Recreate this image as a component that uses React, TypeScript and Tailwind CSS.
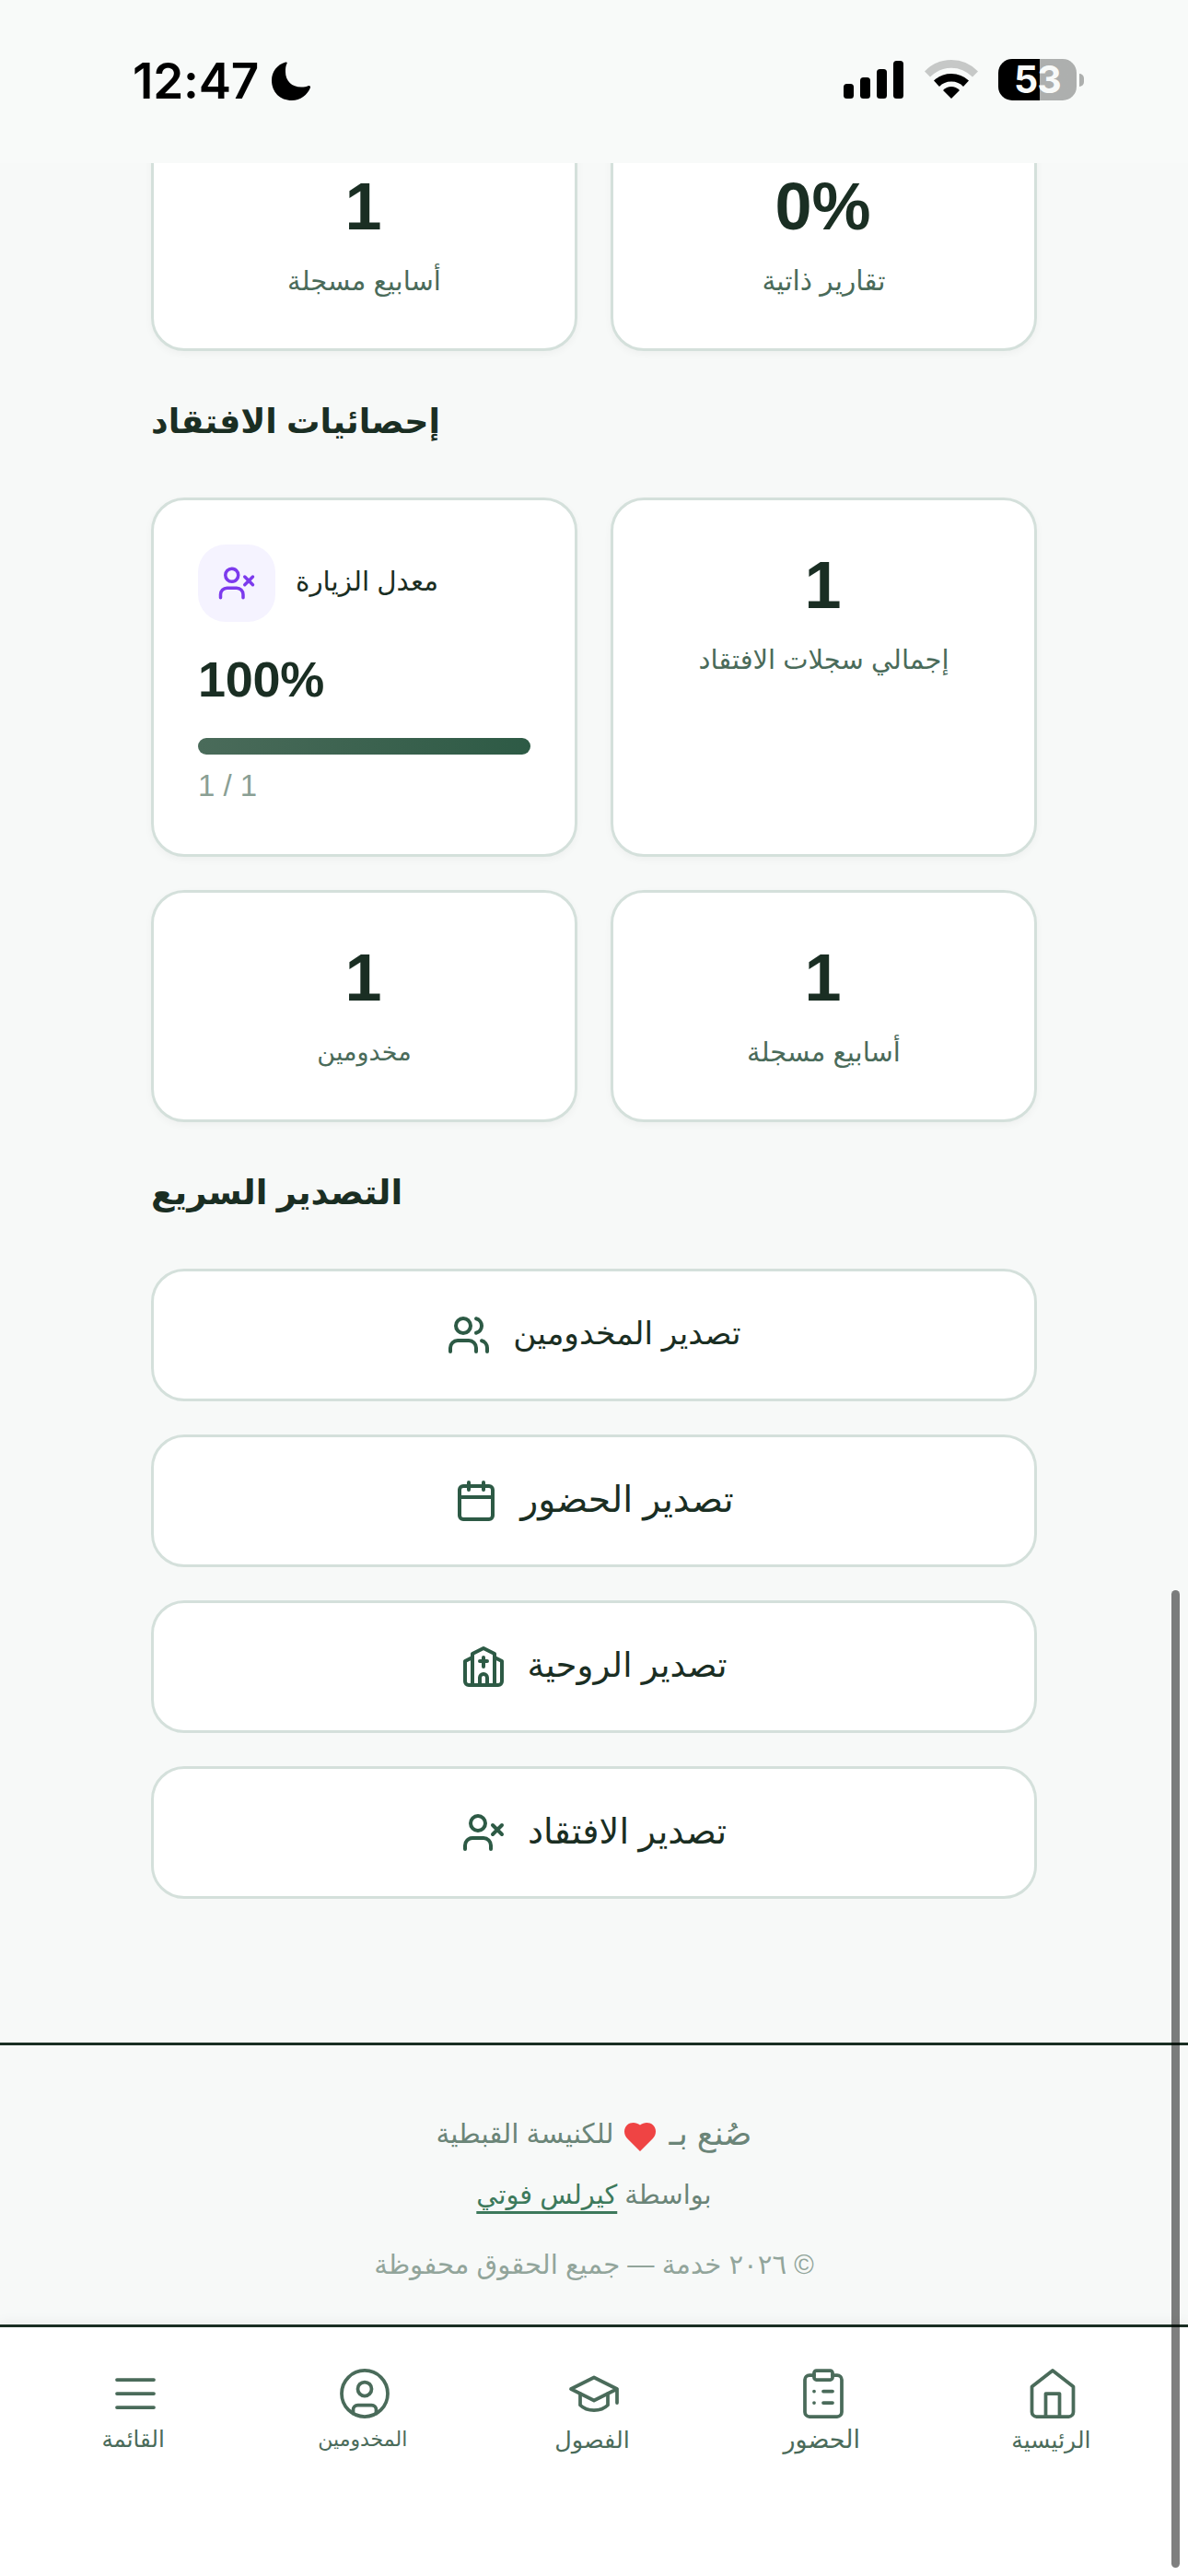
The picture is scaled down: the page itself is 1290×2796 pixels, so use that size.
import type { ReactNode } from "react";

function Stat({ value, label, size = "text-[29px]" }: { value: string; label: string; size?: string }) {
  return (
    <div className="h-full rounded-[36px] border-3 border-[#d4e0db] bg-white pt-[56px] text-center shadow-[0_3px_9px_rgba(0,0,0,0.04)]">
      <p className="pr-[2px] text-[72px] leading-[72px] font-bold text-[#1a2e23]">{value}</p>
      <p dir="rtl" className={`mt-5 leading-[50px] text-[#4a6b5a] ${size}`}>{label}</p>
    </div>
  );
}

function Icon({ size, stroke, children }: { size: number; stroke: number; children: ReactNode }) {
  return (
    <svg
      width={size}
      height={size}
      viewBox="0 0 24 24"
      fill="none"
      stroke="currentColor"
      strokeWidth={stroke}
      strokeLinecap="round"
      strokeLinejoin="round"
      className="shrink-0"
    >
      {children}
    </svg>
  );
}

const userX = (
  <>
    <path d="M16 21v-2a4 4 0 0 0-4-4H6a4 4 0 0 0-4 4v2" />
    <circle cx="9" cy="7" r="4" />
    <path d="m17 8 5 5M22 8l-5 5" />
  </>
);

const exportButtons = [
  {
    label: "تصدير المخدومين",
    size: "text-[34.4px]",
    icon: (
      <>
        <path d="M16 21v-2a4 4 0 0 0-4-4H6a4 4 0 0 0-4 4v2" />
        <circle cx="9" cy="7" r="4" />
        <path d="M22 21v-2a4 4 0 0 0-3-3.87M16 3.13a4 4 0 0 1 0 7.75" />
      </>
    ),
  },
  {
    label: "تصدير الحضور",
    size: "text-[39.4px]",
    icon: (
      <>
        <path d="M8 2v4M16 2v4M3 10h18" />
        <rect x="3" y="4" width="18" height="18" rx="2" />
      </>
    ),
  },
  {
    label: "تصدير الروحية",
    size: "text-[37.1px]",
    icon: (
      <>
        <path d="m18 7 4 2v11a2 2 0 0 1-2 2H4a2 2 0 0 1-2-2V9l4-2" />
        <path d="M14 22v-4a2 2 0 0 0-4 0v4M18 22V5l-6-3-6 3v17M12 7v5M10 9h4" />
      </>
    ),
  },
  { label: "تصدير الافتقاد", size: "text-[38.2px]", icon: userX },
];

const tabs = [
  { label: "القائمة", size: "text-[24.5px]", icon: <path d="M4 6h16M4 12h16M4 18h16" /> },
  {
    label: "المخدومين",
    size: "text-[22px]",
    icon: (
      <>
        <circle cx="12" cy="12" r="10" />
        <circle cx="12" cy="10" r="3" />
        <path d="M7 20.662V19a2 2 0 0 1 2-2h6a2 2 0 0 1 2 2v1.662" />
      </>
    ),
  },
  {
    label: "الفصول",
    size: "text-[25.5px]",
    icon: (
      <>
        <path d="M22 10v6M2 10l10-5 10 5-10 5z" />
        <path d="M6 12v5c3 3 9 3 12 0v-5" />
      </>
    ),
  },
  {
    label: "الحضور",
    size: "text-[27px]",
    icon: (
      <>
        <rect x="8" y="2" width="8" height="4" rx="1" />
        <path d="M16 4h2a2 2 0 0 1 2 2v14a2 2 0 0 1-2 2H6a2 2 0 0 1-2-2V6a2 2 0 0 1 2-2h2" />
        <path d="M12 11h4M12 16h4M8 11h.01M8 16h.01" />
      </>
    ),
  },
  {
    label: "الرئيسية",
    size: "text-[25px]",
    icon: (
      <>
        <path d="m3 9 9-7 9 7v11a2 2 0 0 1-2 2H5a2 2 0 0 1-2-2z" />
        <path d="M9 22V12h6v10" />
      </>
    ),
  },
];

export default function App() {
  return (
    <div className="relative flex h-[2796px] w-[1290px] flex-col overflow-hidden bg-[#f7f9f8] font-['Liberation_Sans','DejaVu_Sans',sans-serif]">
      <header className="z-10 flex h-[177px] shrink-0 items-start justify-between bg-[#f8faf9] pt-[64px] pr-[113px] pl-[144px] text-black">
        <div className="flex items-center">
          <span className="font-['Inter'] text-[53px] leading-[48px] font-semibold tracking-[-0.2px]">12:47</span>
          <svg width="42" height="42" viewBox="0 0 42 42" className="ml-[14px]">
            <path d="M15 .5Q17.500 0 16.500 2C15 5 15 8 15 11c0 10 7 16.500 17 16.500 3 0 6-.5 8-1.500Q42.500 26 42 28C39 36 31 42 22 42 9 42 0 33 0 20 0 11 6 3 15 .5Z" />
          </svg>
        </div>
        <div className="flex items-start">
          <svg width="65" height="41" viewBox="0 0 65 41" className="mt-[2px]">
            <rect y="25" width="11" height="16" rx="3.5" />
            <rect x="18" y="18" width="11" height="23" rx="3.5" />
            <rect x="36" y="9" width="11" height="32" rx="3.5" />
            <rect x="54" width="11" height="41" rx="3.5" />
          </svg>
          <svg width="58" height="42" viewBox="0 0 58 42" className="mt-px ml-[23px]">
            <path fill="#c6c8c7" d="M0 12.500Q12 0 29 0T58 12.500L52 18.500Q42 8.700 29 8.700T6 18.500Z" />
            <path d="M10 22.500Q18 15 29 15T48 22.500L42 29Q37 23.500 29 23.500T16 29Z" />
            <path d="M20 33Q24 29 29 29T38 33L29 42Z" />
          </svg>
          <div className="ml-[22px] flex h-[45px] w-[85px] items-center justify-center rounded-[15px] bg-linear-to-r from-black from-53% to-[#adafae] to-53%">
            <span className="font-['Inter'] text-[41px] leading-none font-bold tracking-[-0.8px] text-[#f8faf9]">53</span>
          </div>
          <span className="mt-[16px] ml-[3px] h-[14px] w-[5px] rounded-r-full bg-[#adafae]" />
        </div>
      </header>

      <main className="-mt-12 flex h-[2088px] shrink-0 flex-col px-[164px]">
        <div className="grid h-[252px] grid-cols-2 gap-9">
          <Stat value="1" label="أسابيع مسجلة" />
          <Stat value="0%" label="تقارير ذاتية" size="text-[29.7px]" />
        </div>

        <div className="flex h-[159px] items-center pb-[5px]">
          <h2 dir="rtl" className="text-[36.4px] font-bold text-[#1a2e23]">إحصائيات الافتقاد</h2>
        </div>

        <div className="grid grid-cols-2 grid-rows-[390px_252px] gap-9">
          <div className="rounded-[36px] border-3 border-[#d4e0db] bg-white p-12 shadow-[0_3px_9px_rgba(0,0,0,0.04)]">
            <div className="flex items-center gap-[22px]">
              <div className="flex h-[84px] w-[84px] items-center justify-center rounded-[30px] bg-[#f5f3ff] text-[#7c3aed]">
                <Icon size={42} stroke={2}>{userX}</Icon>
              </div>
              <span dir="rtl" className="pb-1 text-[29.4px] text-[#1a2e23]">معدل الزيارة</span>
            </div>
            <p className="mt-[35px] text-[54px] leading-[54px] font-bold tracking-[-0.3px] text-[#1a2e23]">100%</p>
            <div className="mt-[37px] h-[18px] rounded-full bg-linear-to-r from-[#4a6b5a] to-[#2d5a45]" />
            <p className="mt-4 text-[33px] leading-[36px] text-[#8a9f94]">1 / 1</p>
          </div>
          <Stat value="1" label="إجمالي سجلات الافتقاد" />
          <Stat value="1" label="مخدومين" size="text-[27px]" />
          <Stat value="1" label="أسابيع مسجلة" />
        </div>

        <div className="flex h-[159px] items-center pb-[5px]">
          <h2 dir="rtl" className="text-[37px] font-bold text-[#1a2e23]">التصدير السريع</h2>
        </div>

        <div className="flex flex-col gap-9">
          {exportButtons.map((b) => (
            <button
              key={b.label}
              className="flex h-[144px] items-center justify-center gap-6 rounded-[36px] border-3 border-[#d4e0db] bg-white text-[#2d5a45]"
            >
              <Icon size={48} stroke={2}>{b.icon}</Icon>
              <span dir="rtl" className={`pb-[3px] text-[#1a2e23] ${b.size}`}>{b.label}</span>
            </button>
          ))}
        </div>
      </main>

      <footer className="flex h-[306px] shrink-0 flex-col items-center border-t-3 border-[#1a2e23] pt-[71px] text-[#6b8578]">
        <p dir="rtl" className="flex h-[50px] items-center text-[29.5px] leading-[50px]">
          <span className="text-[35.5px]">صُنع بـ</span>
          <svg width="34" height="31" viewBox="0 0 34 31" fill="#ef4444" className="mt-[6px] mr-[15px] ml-[11px]">
            <path d="M17 31 3 17C-1 13-1 6 3 2.500 7-1 13-.5 17 2.500 21-.5 27-1 31 2.500c4 3.500 4 10.500 0 14.500Z" />
          </svg>
          <span>للكنيسة القبطية</span>
        </p>
        <p dir="rtl" className="mt-4 h-[50px] text-[28.9px] leading-[50px]">
          بواسطة <a className="text-[#3d7a5c] underline decoration-3 underline-offset-[8px]">كيرلس فوتي</a>
        </p>
        <p dir="rtl" className="mt-[26px] h-[50px] text-[29.2px] leading-[50px] text-[#92a59b]">© ٢٠٢٦ خدمة — جميع الحقوق محفوظة</p>
      </footer>

      <nav className="z-10 flex h-[273px] shrink-0 border-t-3 border-[#1a2e23] bg-white px-[22px] pt-[42px] text-[#4a6b5a] shadow-[0_-3px_12px_rgba(0,0,0,0.05)]">
        {tabs.map((t) => (
          <a key={t.label} className="flex flex-1 flex-col items-center">
            <Icon size={60} stroke={1.5}>{t.icon}</Icon>
            <span dir="rtl" className={`mt-0.5 pr-1 leading-[36px] whitespace-nowrap ${t.size}`}>{t.label}</span>
          </a>
        ))}
      </nav>

      {/* scroll indicator */}
      <div className="absolute top-[1726px] right-[9px] z-20 h-[1061px] w-[9px] rounded-full bg-black/50" />
    </div>
  );
}
